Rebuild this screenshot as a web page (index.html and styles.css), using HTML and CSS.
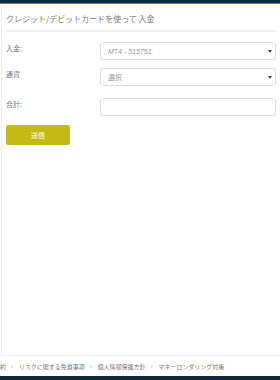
FILE: index.html
```html
<!DOCTYPE html>
<html>
	<head>
		<meta charset="utf-8">
		<title>入金</title>
		<link rel="stylesheet" href="styles.css">
	</head>
	<body>
		<div class="topbar"></div>
		<div class="page">
			<div class="side"></div>
			<div class="main">
				<h1 class="title">クレジット/デビットカードを使って 入金</h1>
				<form class="form">
					<div class="row account">
						<label>入金:</label>
						<div class="field select"><span class="val italic">MT4 - 515751</span><span class="arrow"></span></div>
					</div>
					<div class="row currency">
						<label>通貨</label>
						<div class="field select"><span class="val">選択</span><span class="arrow"></span></div>
					</div>
					<div class="row amount">
						<label>合計:</label>
						<div class="field"></div>
					</div>
					<button type="button" class="submit">送信</button>
				</form>
			</div>
		</div>
		<div class="footer">
			<div class="links">約 <span class="dot">・</span> リスクに関する免責事項 <span class="dot">・</span> 個人情報保護方針 <span class="dot">・</span> マネーロンダリング対策</div>
		</div>
		<div class="bottombar"></div>
	</body>
</html>
```

FILE: styles.css
```css
html, body {
	margin: 0;
	padding: 0;
	width: 100%;
	height: 100%;
	overflow: hidden;
	background: #fff;
	font-family: "Noto Sans CJK JP", "Liberation Sans", sans-serif;
	color: #777;
}
body {
	display: flex;
	flex-direction: column;
}
.topbar {
	height: 3px;
	background: #0e2a3b;
	border-bottom: 1px solid #1b8fc9;
}
.page {
	flex: 1;
	display: flex;
}
.side {
	width: 1px;
	border-right: 1px solid #eee;
}
.main {
	flex: 1;
	padding: 0 4px 0 4px;
}
.title {
	font-size: 8px;
	line-height: 11px;
	font-weight: normal;
	margin: 0;
	padding: 9px 0 6px 0;
	border-bottom: 2px solid #eee;
}
.form {
	padding-top: 10px;
}
.row {
	display: flex;
	align-items: flex-start;
}
.account {
	margin-bottom: 8px;
}
.currency {
	margin-bottom: 12px;
}
.amount {
	margin-bottom: 9px;
}
.row label {
	width: 94px;
	font-size: 7px;
	line-height: 10px;
	padding-top: 1px;
}
.field {
	flex: 1;
	height: 16px;
	border: 1px solid #ddd;
	border-radius: 3px;
	display: flex;
	align-items: center;
	justify-content: space-between;
	padding: 0 3px 0 7px;
	font-size: 7px;
	color: #999;
}
.italic {
	font-style: italic;
	font-family: "Liberation Sans", sans-serif;
}
.arrow {
	width: 0;
	height: 0;
	border-left: 2px solid transparent;
	border-right: 2px solid transparent;
	border-top: 3px solid #444;
}
.submit {
	display: block;
	margin: 0;
	width: 64px;
	height: 20px;
	border: none;
	border-radius: 2px;
	background: #c3bb14;
	color: #fff;
	font-family: "Noto Sans CJK JP", sans-serif;
	font-size: 7px;
}
.footer {
	border-top: 1px solid #eee;
	height: 20px;
	display: flex;
	align-items: center;
	overflow: hidden;
}
.links {
	font-size: 6px;
	white-space: nowrap;
	color: #777;
}
.dot {
	color: #aaa;
	padding: 0 2px;
}
.bottombar {
	height: 4px;
	background: #0e2a3b;
}
```
